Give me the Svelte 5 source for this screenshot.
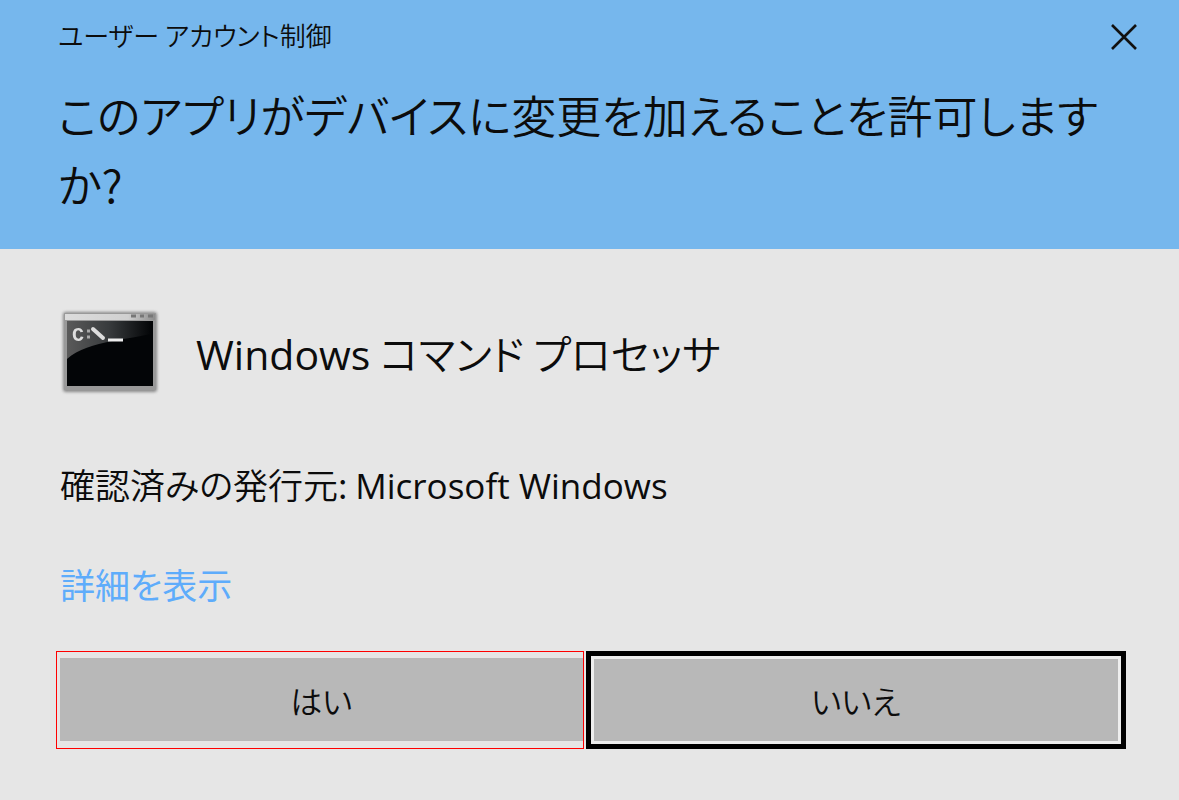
<script lang="ts">
	let open = $state(true);
	let showDetails = $state(false);

	function close() {
		open = false;
	}

	function toggleDetails(event: MouseEvent) {
		event.preventDefault();
		showDetails = !showDetails;
	}
</script>

{#if open}
	<div class="dialog" role="alertdialog" aria-labelledby="question">
		<header>
			<div class="title-bar">
				<span>ユーザー アカウント制御</span>
				<button class="close" aria-label="閉じる" onclick={close}>
					<svg viewBox="0 0 28 28" width="28" height="28">
						<path d="M2 2 26 26M26 2 2 26" stroke="#111" stroke-width="2.6" />
					</svg>
				</button>
			</div>
			<h1 id="question">このアプリがデバイスに変更を加えることを許可しますか?</h1>
		</header>

		<main>
			<div class="program">
				<svg class="icon" viewBox="0 0 104 88" width="104" height="88" aria-hidden="true">
					<defs>
						<linearGradient id="glare" x1="0" y1="0" x2="1" y2="0">
							<stop offset="0" stop-color="#5a5a5a" />
							<stop offset="0.5" stop-color="#383b3d" />
							<stop offset="1" stop-color="#030507" />
						</linearGradient>
						<linearGradient id="bar" x1="0" y1="0" x2="1" y2="0">
							<stop offset="0" stop-color="#dcdcdc" />
							<stop offset="0.7" stop-color="#d0d0d0" />
							<stop offset="1" stop-color="#8c8c8c" />
						</linearGradient>
						<filter id="shadow" x="-10%" y="-10%" width="120%" height="120%">
							<feGaussianBlur stdDeviation="1.6" />
						</filter>
						<filter id="soft" color-interpolation-filters="sRGB">
							<feGaussianBlur stdDeviation="0.6" />
						</filter>
					</defs>
					<rect x="5" y="3" width="94" height="80" rx="3" fill="#888" filter="url(#shadow)" />
					<g filter="url(#soft)">
						<rect x="6" y="4" width="92" height="77" rx="1" fill="#999" />
						<rect x="7" y="5" width="90" height="6" fill="url(#bar)" />
						<path d="M73 7h5M82 7h4M90 7h5" stroke="#777" stroke-width="3" />
						<rect x="9" y="12" width="86" height="65" fill="#030507" />
						<path d="M9 12h84v13C74 29 64 30 54 32 36 36 20 40 9 50z" fill="url(#glare)" />
						<text x="14" y="32" class="prompt">C</text>
						<path d="M29 22h3M29 28h3" stroke="#aaa" stroke-width="3" />
						<path d="M35 20 45 29" stroke="#ddd" stroke-width="4" stroke-linecap="round" />
						<path d="M50 31h15" stroke="#eee" stroke-width="3" />
					</g>
				</svg>
				<h2><span class="latin">Windows</span> コマンド プロセッサ</h2>
			</div>

			<p>確認済みの発行元: <span class="latin">Microsoft Windows</span></p>
			<a href="#details" onclick={toggleDetails}>詳細を表示</a>
			{#if showDetails}
				<p id="details" class="latin">cmd.exe</p>
			{/if}

			<div class="actions">
				<div class="highlight">
					<button onclick={close}>はい</button>
				</div>
				<button class="default" onclick={close}>いいえ</button>
			</div>
		</main>
	</div>
{/if}

<style>
	:global(body) {
		margin: 0;
		background-color: #e6e6e6;
	}

	.dialog {
		color: #0c0c0c;
		font-family: "Noto Sans CJK JP", sans-serif;
		font-weight: 350;
		font-feature-settings: "palt";
	}

	.latin {
		font-family: "Open Sans", "Noto Sans", sans-serif;
		font-weight: 400;
	}

	header {
		padding: 15px 54px 31px 58px;
		background-color: #76b7ed;
	}

	.title-bar {
		display: flex;
		align-items: flex-end;
		justify-content: space-between;
		margin-right: -17px;
		font-size: 26px;
		line-height: 40px;
	}

	.close {
		display: flex;
		padding: 4px;
		border: none;
		background: none;
		cursor: pointer;
	}

	h1 {
		margin: 25px 0 0;
		font-size: 45px;
		font-weight: inherit;
		line-height: 69px;
	}

	main {
		padding: 60px 53px 48px 56px;
	}

	.program {
		display: flex;
		align-items: center;
		gap: 34px;
	}

	.icon {
		flex: none;
		margin-left: 2px;
	}

	.prompt {
		fill: #ddd;
		font-family: "Liberation Mono", monospace;
		font-size: 20px;
		font-weight: 700;
	}

	h2 {
		margin: 0;
		font-size: 41px;
		font-weight: inherit;
		line-height: 60px;
	}

	p {
		margin: 62px 4px 48px;
		font-size: 35px;
		line-height: 50px;
	}

	a {
		display: block;
		width: max-content;
		margin: 0 4px;
		color: #5eacfb;
		font-size: 35px;
		font-weight: 400;
		line-height: 50px;
		text-decoration: none;
	}
	a:hover {
		text-decoration: underline;
	}

	.actions {
		display: flex;
		gap: 2px;
		margin-top: 42px;
	}

	.actions button {
		box-sizing: border-box;
		min-height: 83px;
		padding: 0;
		border: none;
		background-color: #b8b8b8;
		color: inherit;
		font: inherit;
		font-feature-settings: inherit;
		font-size: 32px;
		cursor: pointer;
	}

	.highlight {
		display: flex;
		flex: 528;
		padding: 6px 0 7px 3px;
		border: 1px solid #f00;
	}
	.highlight button {
		flex: 1;
	}

	/* Default button: thick focus ring with a light inner edge */
	.actions .default {
		flex: 536;
		border: 5px solid #000;
		box-shadow: inset 0 0 0 3px #eee;
	}
</style>
